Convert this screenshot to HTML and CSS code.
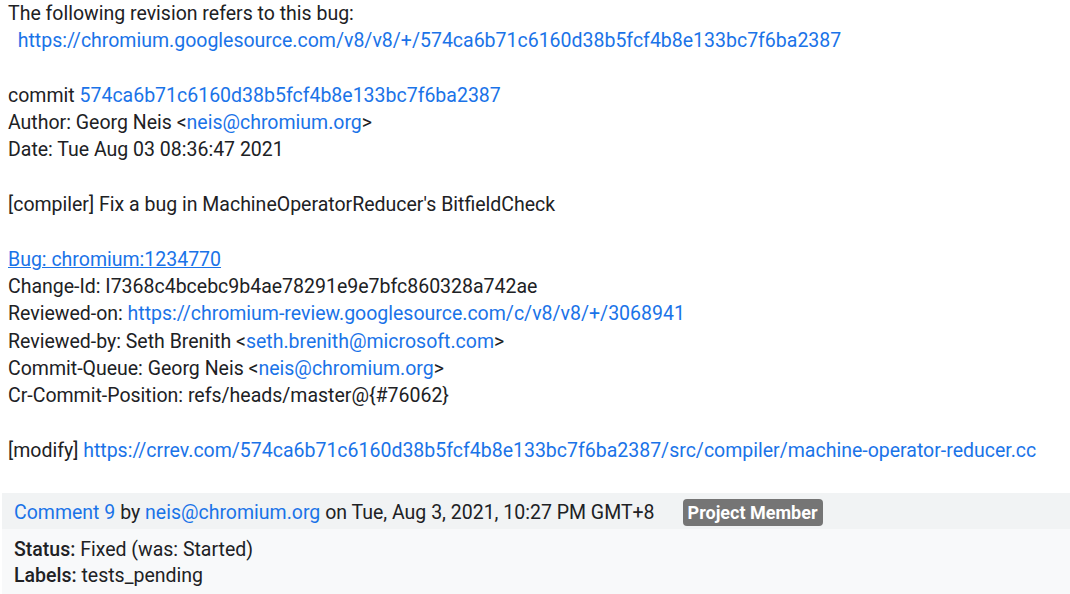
FILE: index.html
```html
<!DOCTYPE html>
<html>
<head>
<meta charset="utf-8">
<link rel="stylesheet" href="styles.css">
</head>
<body>
<div class="page">
<div class="content">
<div>The following revision refers to this bug:</div>
<div>&nbsp;&nbsp;<a href="#">https://chromium.googlesource.com/v8/v8/+/574ca6b71c6160d38b5fcf4b8e133bc7f6ba2387</a></div>
<div>&nbsp;</div>
<div>commit <a href="#">574ca6b71c6160d38b5fcf4b8e133bc7f6ba2387</a></div>
<div>Author: Georg Neis &lt;<a href="#">neis@chromium.org</a>&gt;</div>
<div>Date: Tue Aug 03 08:36:47 2021</div>
<div>&nbsp;</div>
<div>[compiler] Fix a bug in MachineOperatorReducer's BitfieldCheck</div>
<div>&nbsp;</div>
<div><a href="#" class="u">Bug: chromium:1234770</a></div>
<div>Change-Id: I7368c4bcebc9b4ae78291e9e7bfc860328a742ae</div>
<div>Reviewed-on: <a href="#">https://chromium-review.googlesource.com/c/v8/v8/+/3068941</a></div>
<div>Reviewed-by: Seth Brenith &lt;<a href="#">seth.brenith@microsoft.com</a>&gt;</div>
<div>Commit-Queue: Georg Neis &lt;<a href="#">neis@chromium.org</a>&gt;</div>
<div>Cr-Commit-Position: refs/heads/master@{#76062}</div>
<div>&nbsp;</div>
<div>[modify] <a href="#">https://crrev.com/574ca6b71c6160d38b5fcf4b8e133bc7f6ba2387/src/compiler/machine-operator-reducer.cc</a></div>
</div>
<div class="comment">
  <div class="comment-head"><a href="#">Comment 9</a>&nbsp;by&nbsp;<a href="#">neis@chromium.org</a>&nbsp;on Tue, Aug 3, 2021, 10:27 PM GMT+8<span class="badge">Project Member</span></div>
  <div class="comment-body">
    <div><b>Status:</b> Fixed (was: Started)</div>
    <div><b>Labels:</b> tests_pending</div>
  </div>
</div>
</div>
</body>
</html>
```
FILE: styles.css
```css
html, body { margin: 0; padding: 0; background: #fff; }
body {
  font-family: Roboto, "Noto Sans", sans-serif;
  font-size: 19.5px;
  color: #202124;
}
.content {
  padding: 0 0 0 8px;
  line-height: 27.3px;
}
.content > div { white-space: pre; }
a { color: #1a73e8; text-decoration: none; }
a.u { text-decoration: underline; }
.comment {
  margin: 29px 0 0 2px;
}
.comment-head {
  background: #f1f3f4;
  height: 36px;
  box-sizing: border-box;
  display: flex;
  align-items: baseline;
  padding: 6px 0 0 12px;
  line-height: 27px;
  white-space: pre;
}
.badge {
  margin-left: 28px;
  background: #757575;
  color: #fff;
  font-weight: bold;
  border-radius: 4px;
  padding: 1px 5px;
  line-height: 25px;
  font-size: 18px;
}
.comment-body {
  background: #f8f9fa;
  padding: 8px 12px 10px;
  line-height: 26px;
}
.comment-body b { font-weight: 500; }
```
